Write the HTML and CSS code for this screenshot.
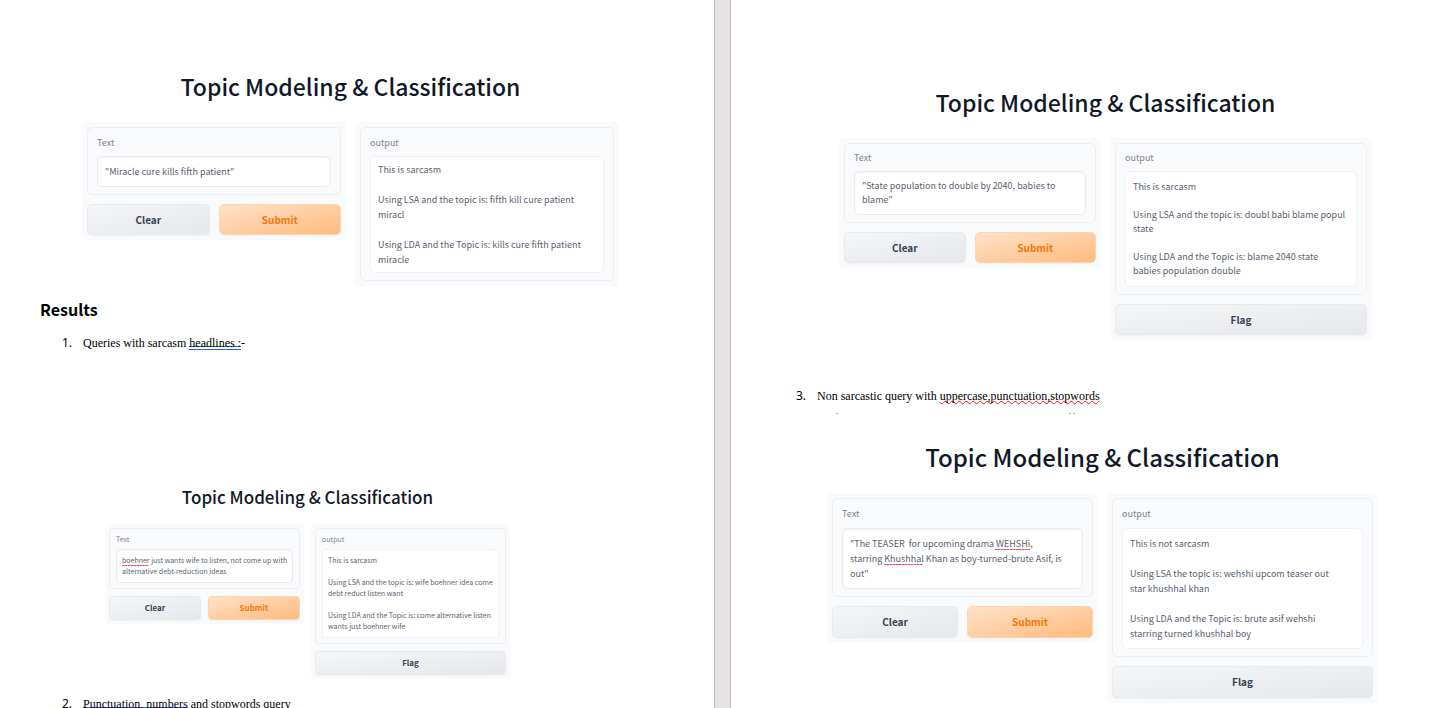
FILE: index.html
```html
<!DOCTYPE html>
<html lang="en">
<head>
<meta charset="utf-8">
<title>Topic Modeling &amp; Classification - Results</title>
<link rel="stylesheet" href="styles.css">
</head>
<body>
<main class="viewer">
  <section class="page page-left">
    <article class="demo demo-a">
      <h1 class="demo-title">Topic Modeling &amp; Classification</h1>
      <div class="columns">
        <div class="panel">
          <div class="box">
            <label for="text-a">Text</label>
            <div class="field"><textarea id="text-a" rows="1" spellcheck="false">"Miracle cure kills fifth patient"</textarea></div>
          </div>
          <div class="actions">
            <button class="btn" type="button">Clear</button>
            <button class="btn btn-primary" type="button">Submit</button>
          </div>
        </div>
        <div class="panel panel-cut">
          <div class="box">
            <label for="out-a">output</label>
            <div class="field"><textarea id="out-a" class="output" rows="7" readonly spellcheck="false">This is sarcasm

Using LSA and the topic is: fifth kill cure patient
miracl

Using LDA and the Topic is: kills cure fifth patient
miracle</textarea></div>
          </div>
        </div>
      </div>
    </article>

    <h2 class="heading">Results</h2>
    <p class="item"><span class="num">1.</span><span>Queries with sarcasm <span class="grammar">headlines :</span>-</span></p>

    <article class="demo demo-b">
      <h1 class="demo-title">Topic Modeling &amp; Classification</h1>
      <div class="columns">
        <div class="panel">
          <div class="box">
            <label for="text-b">Text</label>
            <div class="field"><textarea id="text-b" rows="2" spellcheck="false">boehner just wants wife to listen, not come up with
alternative debt-reduction ideas</textarea><i class="typo typo-boehner"></i></div>
          </div>
          <div class="actions">
            <button class="btn" type="button">Clear</button>
            <button class="btn btn-primary" type="button">Submit</button>
          </div>
        </div>
        <div class="panel">
          <div class="box">
            <label for="out-b">output</label>
            <div class="field"><textarea id="out-b" class="output" rows="7" readonly spellcheck="false">This is sarcasm

Using LSA and the topic is: wife boehner idea come
debt reduct listen want

Using LDA and the Topic is: come alternative listen
wants just boehner wife</textarea></div>
          </div>
          <div class="actions"><button class="btn" type="button">Flag</button></div>
        </div>
      </div>
    </article>

    <p class="item item-second"><span class="num">2.</span><span><span class="grammar">Punctuation, numbers</span> and <span class="spelling">stopwords</span> query</span></p>
  </section>

  <div class="gutter"></div>

  <section class="page page-right">
    <article class="demo demo-c">
      <h1 class="demo-title">Topic Modeling &amp; Classification</h1>
      <div class="columns">
        <div class="panel">
          <div class="box">
            <label for="text-c">Text</label>
            <div class="field"><textarea id="text-c" rows="2" spellcheck="false">"State population to double by 2040, babies to
blame"</textarea></div>
          </div>
          <div class="actions">
            <button class="btn" type="button">Clear</button>
            <button class="btn btn-primary" type="button">Submit</button>
          </div>
        </div>
        <div class="panel">
          <div class="box">
            <label for="out-c">output</label>
            <div class="field"><textarea id="out-c" class="output" rows="7" readonly spellcheck="false">This is sarcasm

Using LSA and the topic is: doubl babi blame popul
state

Using LDA and the Topic is: blame 2040 state
babies population double</textarea></div>
          </div>
          <div class="actions"><button class="btn" type="button">Flag</button></div>
        </div>
      </div>
    </article>

    <p class="item item-third"><span class="num">3.</span><span>Non sarcastic query with <span class="spelling">uppercase,punctuation,stopwords</span></span></p>
    <svg class="residue" width="300" height="4" viewBox="0 0 300 4" aria-hidden="true"><path d="M4 1.500h2M237 1.500h2M241 1.500h2" stroke="#a4a9b0" stroke-width="1"/></svg>

    <article class="demo demo-d">
      <h1 class="demo-title">Topic Modeling &amp; Classification</h1>
      <div class="columns">
        <div class="panel">
          <div class="box">
            <label for="text-d">Text</label>
            <div class="field"><textarea id="text-d" rows="3" spellcheck="false">"The TEASER  for upcoming drama WEHSHi,
starring Khushhal Khan as boy-turned-brute Asif, is
out"</textarea><i class="typo typo-wehshi"></i><i class="typo typo-khushhal"></i></div>
          </div>
          <div class="actions">
            <button class="btn" type="button">Clear</button>
            <button class="btn btn-primary" type="button">Submit</button>
          </div>
        </div>
        <div class="panel">
          <div class="box">
            <label for="out-d">output</label>
            <div class="field"><textarea id="out-d" class="output" rows="7" readonly spellcheck="false">This is not sarcasm

Using LSA the topic is: wehshi upcom teaser out
star khushhal khan

Using LDA and the Topic is: brute asif wehshi
starring turned khushhal boy</textarea></div>
          </div>
          <div class="actions"><button class="btn" type="button">Flag</button></div>
        </div>
      </div>
    </article>
  </section>
</main>
</body>
</html>
```
FILE: styles.css
```css
* { box-sizing: border-box; }

body {
  margin: 0;
  background: #fff;
  color: #000;
  font-family: "Liberation Serif", serif;
}

.viewer {
  display: flex;
  height: 100vh;
  overflow: hidden;
}

.page { min-width: 0; }
.page-left { flex: 714 1 0; padding-top: 67px; }
.page-right { flex: 709 1 0; padding-top: 83px; }

.gutter {
  flex: 0 0 17px;
  background: #e8e3e3;
  border: solid #c0bfbf;
  border-width: 0 1px;
}

/* Document text */
.heading {
  margin: 11px 0 0 40px;
  font: 700 16px/24px "Noto Sans CJK SC", "Noto Sans", sans-serif;
}

.item {
  display: flex;
  margin: 14px 0 0 62px;
  font-size: 12px;
  line-height: 16px;
  white-space: nowrap;
}

.num {
  flex: 0 0 21px;
  font-family: "Noto Sans", sans-serif;
}

.item-second { margin-top: 17px; }
.item-third { margin: 48px 0 0 65px; }

.grammar {
  background:
    linear-gradient(#2b62d9, #2b62d9) 0 100% / 100% 1px no-repeat,
    linear-gradient(#2b62d9, #2b62d9) 0 calc(100% - 3px) / 100% 1px no-repeat;
}

.spelling {
  text-decoration: underline wavy #f01818 1px;
  text-underline-offset: 0;
  text-decoration-skip-ink: none;
}

.residue {
  display: block;
  margin: 8px 0 0 101px;
}

/* Demo blocks */
.demo {
  --text: 9px;
  --line: 15px;
  --gap: 9px;
  --pad: 5px;
  --inset: 9px;
  --label-top: 7px;
  --label-gap: 6px;
  --field-y: 7px;
  --output-y: 5px;
  --field-x: 7px;
  --button: 31px;
  --button-text: 10px;
  --title: 23px;
  --title-line: 38px;
  --title-gap: 17px;
  --radius: 5px;
  font-family: "Noto Sans CJK SC", "Noto Sans", sans-serif;
}

.demo-a { margin: 0 95px 0 82px; }

.demo-b {
  --text: 7px;
  --line: 11px;
  --gap: 7px;
  --pad: 4px;
  --inset: 6px;
  --label-top: 5px;
  --label-gap: 4px;
  --field-y: 5px;
  --output-y: 5px;
  --field-x: 5px;
  --button: 24px;
  --button-text: 8px;
  --title: 17px;
  --title-line: 28px;
  --title-gap: 13px;
  --radius: 4px;
  margin: 132px 204px 0 105px;
}

.demo-c {
  --line: 14px;
  --output-y: 8px;
  margin: 0 68px 0 108px;
}

.demo-d {
  --label-gap: 7px;
  --output-y: 7px;
  --button: 32px;
  --title: 24px;
  margin: 22px 62px 0 96px;
}

.demo-title {
  margin: 0 0 var(--title-gap);
  color: #111827;
  font-size: var(--title);
  font-weight: 500;
  line-height: var(--title-line);
  text-align: center;
  white-space: nowrap;
}

.columns {
  display: grid;
  grid-template-columns: 1fr 1fr;
  align-items: start;
  gap: var(--gap);
}

.panel {
  display: flex;
  flex-direction: column;
  gap: var(--gap);
  min-width: 0;
  padding: var(--pad);
  border-radius: var(--radius);
  background: #f9fafb;
}

.panel-cut { border-radius: var(--radius) var(--radius) 0 0; }

.box {
  padding: var(--label-top) var(--inset);
  border: 1px solid #eceef1;
  border-radius: var(--radius);
}

.box label {
  display: block;
  margin-bottom: var(--label-gap);
  color: #7f8590;
  font-size: var(--text);
  line-height: var(--line);
}

.field { position: relative; }

textarea {
  display: block;
  width: 100%;
  padding: var(--field-y) var(--field-x);
  overflow: hidden;
  resize: none;
  border: 1px solid #e9ebee;
  border-radius: var(--radius);
  outline: none;
  background: #fff;
  box-shadow: inset 0 1px 2px #0000000d;
  color: #59616e;
  font-family: inherit;
  font-size: var(--text);
  line-height: var(--line);
  white-space: pre;
}

.output {
  padding-top: var(--output-y);
  padding-bottom: var(--output-y);
  border-color: #f0f1f4;
  box-shadow: none;
}

/* Spell-check marks drawn over the text boxes */
.typo {
  position: absolute;
  height: 1px;
  background: repeating-linear-gradient(90deg, #f0454a 0 2px, #f9a5a7 2px 3px);
}
.typo-boehner { top: 16px; left: 6px; width: 27px; }
.typo-wehshi { top: 21px; left: 153px; width: 35px; }
.typo-khushhal { top: 36px; left: 42px; width: 39px; }

.actions {
  display: flex;
  gap: var(--gap);
}

.btn {
  flex: 1 1 0;
  height: var(--button);
  padding: 0;
  border: 1px solid #e8eaed;
  border-radius: var(--radius);
  background: linear-gradient(to bottom right, #f5f6f7, #e6e7eb);
  box-shadow: 0 1px 2px #0000000a;
  color: #374151;
  font-family: inherit;
  font-size: var(--button-text);
  font-weight: 700;
  line-height: 1;
}

.btn-primary {
  border-color: #ffd3ab;
  background: linear-gradient(to bottom right, #ffe2c9, #ffba7d);
  color: #f27a0a;
}
```
